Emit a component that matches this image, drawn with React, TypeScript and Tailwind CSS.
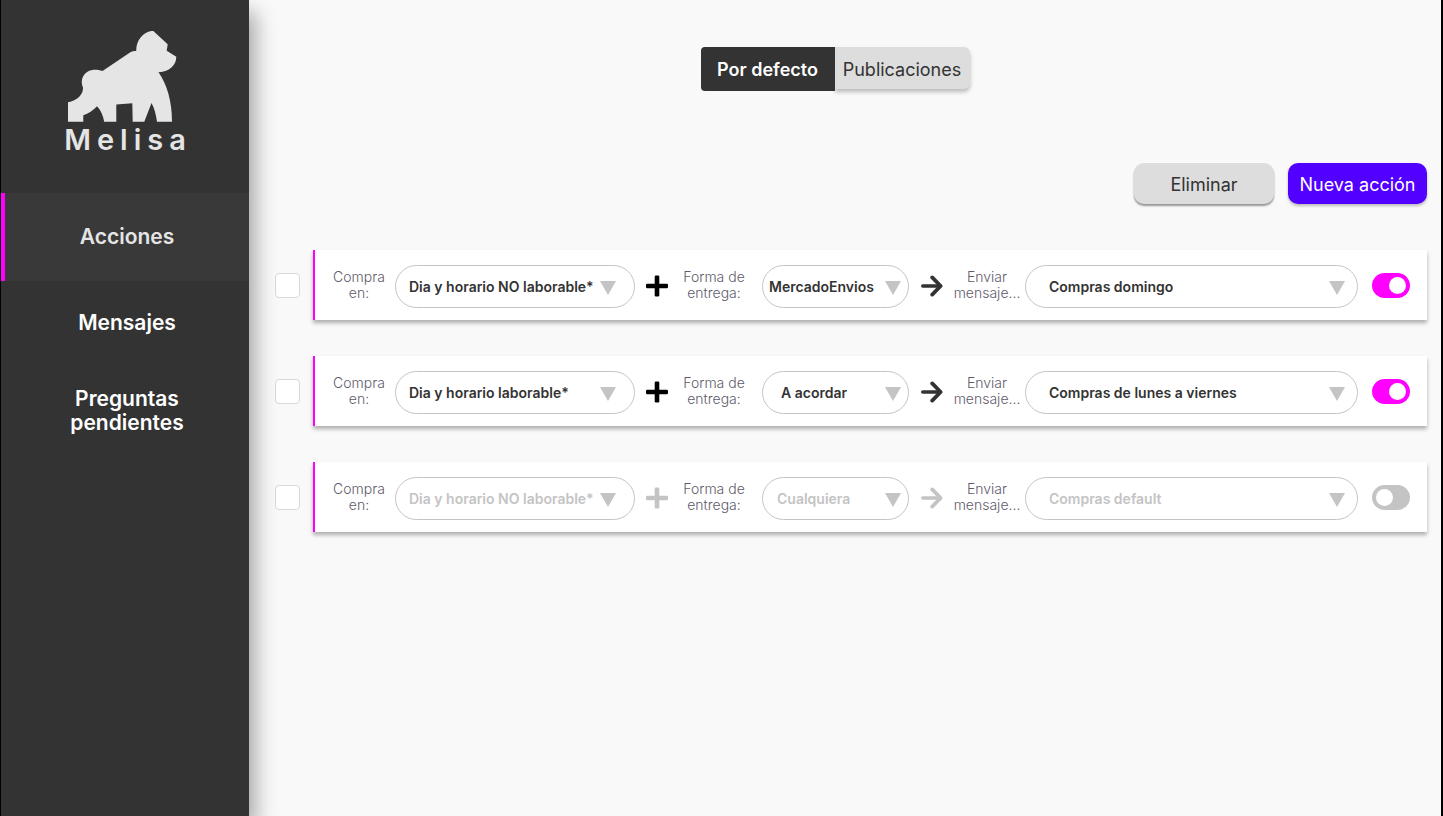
import { useState } from 'react';

type Row = {
  id: number;
  schedule: string;
  delivery: string;
  deliveryInset: string;
  message: string;
  enabled: boolean;
};

const initialRows: Row[] = [
  { id: 1, schedule: 'Dia y horario NO laborable*', delivery: 'MercadoEnvios', deliveryInset: 'pl-[6px]', message: 'Compras domingo', enabled: true },
  { id: 2, schedule: 'Dia y horario laborable*', delivery: 'A acordar', deliveryInset: 'pl-[18px]', message: 'Compras de lunes a viernes', enabled: true },
  { id: 3, schedule: 'Dia y horario NO laborable*', delivery: 'Cualquiera', deliveryInset: 'pl-[14px]', message: 'Compras default', enabled: false },
];

const navItems = [
  { label: 'Acciones', active: true, height: 'h-[88px]' },
  { label: 'Mensajes', active: false, height: 'h-[84px]' },
  { label: 'Preguntas pendientes', active: false, height: 'h-[92px]' },
];

function Logo() {
  return (
    <div className="flex h-[193px] flex-col items-center pt-[30px] text-[#e5e5e5]">
      <svg viewBox="67 30 116 92" className="h-[92px] w-[116px]" fill="currentColor" aria-hidden="true">
        <path d="M153.3 31 L167.7 44.3 L166.7 50.7 L176.3 56.7 C176.3 65 170 71.3 158.5 72.3 C167 84.5 172 101 172 121.7 H157 C156 114.5 154.3 108 151.5 103 L144.3 121.7 H132.7 L132.3 103.2 L116.3 104.5 V121.7 H104.2 C103 115.5 101 110.5 97 106.3 C93 110.5 88.5 113.5 83.3 115.3 V121.7 H68 V102.3 C77 100.7 83.5 94.5 83 87.5 C78.5 76 88 66 102.5 71 L130 52.5 C132 51.3 134 51 136.2 51 C136 41 142.5 32.3 151.5 31 Z" />
      </svg>
      <span className="mt-[2px] pl-[6px] text-[29px] leading-[32px] font-semibold tracking-[6px]">Melisa</span>
    </div>
  );
}

function PlusIcon({ on }: { on: boolean }) {
  return (
    <svg viewBox="0 0 22 22" className={on ? 'size-[22px] shrink-0 text-black' : 'size-[22px] shrink-0 text-[#c4c4c4]'} fill="currentColor" aria-hidden="true">
      <rect x="0" y="8.7" width="22" height="4.6" rx="1.2" />
      <rect x="8.7" y="0.5" width="4.6" height="21" rx="1.2" />
    </svg>
  );
}

function ArrowIcon({ on }: { on: boolean }) {
  return (
    <svg viewBox="0 0 22 22" className={on ? 'size-[22px] shrink-0 text-[#333333]' : 'size-[22px] shrink-0 text-[#c4c4c4]'} fill="none" stroke="currentColor" aria-hidden="true">
      <path d="M1.8 11 H19" strokeWidth="3.6" strokeLinecap="round" />
      <path d="M11.2 2.4 L19.6 11 L11.2 19.6" strokeWidth="3.8" strokeLinejoin="round" strokeLinecap="round" />
    </svg>
  );
}

function Pill({ id, value, on, width, inset, arrow }: { id: string; value: string; on: boolean; width: string; inset: string; arrow: string }) {
  return (
    <div className={`relative pt-[2px] ${width}`}>
      <select
        id={id}
        defaultValue={value}
        className={`h-[43px] w-full appearance-none rounded-full border border-[#c4c4c4] bg-white text-[14px] font-semibold ${inset} ${on ? 'text-[#333333]' : 'text-[#c4c4c4]'}`}
      >
        <option>{value}</option>
      </select>
      <svg viewBox="0 0 16 14" className={`pointer-events-none absolute top-[18px] h-[14px] w-[16px] ${arrow}`} fill="#c4c4c4" aria-hidden="true">
        <path d="M0 0 H16 L8 14 Z" />
      </svg>
    </div>
  );
}

function ActionRow({ row, onToggle }: { row: Row; onToggle: () => void }) {
  const on = row.enabled;
  const label = 'shrink-0 text-center text-[14px] leading-[16px] font-light whitespace-nowrap text-[#5f5b6b]';
  return (
    <li className="flex items-center gap-[13px]">
      <input
        type="checkbox"
        aria-label={`Seleccionar acción ${row.id}`}
        className="size-[25px] shrink-0 appearance-none rounded-[4px] border border-[#d9d9d9] bg-white checked:bg-[#ff00ff]"
      />
      <div className="flex h-[70px] min-w-0 flex-1 items-center border-l-2 border-[#ff00ff] bg-white pr-[17px] pl-4 shadow-[0_3px_4px_rgba(0,0,0,0.3)]">
        <label htmlFor={`schedule-${row.id}`} className={`${label} mr-2 w-14`}>
          Compra
          <br />
          en:
        </label>
        <Pill id={`schedule-${row.id}`} value={row.schedule} on={on} width="w-60 shrink-0" inset="pl-[13px]" arrow="right-[19px]" />
        <div className="mr-[10px] ml-[11px] flex pt-[2px]">
          <PlusIcon on={on} />
        </div>
        <label htmlFor={`delivery-${row.id}`} className={`${label} mr-3 w-[72px]`}>
          Forma de
          <br />
          entrega:
        </label>
        <Pill id={`delivery-${row.id}`} value={row.delivery} on={on} width="w-[147px] shrink-0" inset={row.deliveryInset} arrow="right-[8px]" />
        <div className="mr-[10px] ml-3 flex pt-[2px]">
          <ArrowIcon on={on} />
        </div>
        <label htmlFor={`message-${row.id}`} className={`${label} mr-1 w-[68px]`}>
          Enviar
          <br />
          mensaje...
        </label>
        <Pill id={`message-${row.id}`} value={row.message} on={on} width="min-w-0 flex-1" inset="pl-[23px]" arrow="right-[13px]" />
        <input
          type="checkbox"
          role="switch"
          aria-label={`Activar acción ${row.id}`}
          checked={on}
          onChange={onToggle}
          className="ml-[14px] flex h-[25px] w-[38px] shrink-0 appearance-none items-center rounded-full bg-[#c4c4c4] px-1 before:size-[17px] before:rounded-full before:bg-white checked:justify-end checked:bg-[#ff00ff]"
        />
      </div>
    </li>
  );
}

export default function App() {
  const [rows, setRows] = useState(initialRows);
  const toggle = (id: number) => setRows(rows.map((r) => (r.id === id ? { ...r, enabled: !r.enabled } : r)));

  return (
    <div className="flex min-h-screen border-r-2 border-l border-black bg-[#f9f9f9] font-['Inter',sans-serif]">
      <aside className="relative w-[248px] shrink-0 bg-[#333333] shadow-[6px_12px_20px_rgba(0,0,0,0.35)]">
        <Logo />
        <nav>
          {navItems.map((item) => (
            <a
              key={item.label}
              href="#"
              className={`flex items-center justify-center border-l-4 text-center text-[21px] leading-[24px] font-semibold ${item.height} ${
                item.active ? 'border-[#ff00ff] bg-[#393939] text-[#e5e5e5]' : 'border-transparent text-white'
              }`}
            >
              <span className="w-[130px]">{item.label}</span>
            </a>
          ))}
        </nav>
      </aside>

      <main className="min-w-0 flex-1 pt-[47px] pr-[14px] pl-[26px]">
        <div className="mr-8 flex items-start justify-center">
          <button type="button" className="relative h-[44px] w-[134px] rounded-l-[4px] bg-[#333333] text-[18px] font-semibold text-white">
            Por defecto
          </button>
          <button type="button" className="h-[42px] w-[135px] rounded-r-[6px] bg-[#dddddd] pt-[2px] text-[18px] text-[#333333] shadow-[0_3px_4px_rgba(0,0,0,0.25)]">
            Publicaciones
          </button>
        </div>

        <div className="mt-[72px] flex justify-end gap-[14px]">
          <button type="button" className="h-[41px] w-[140px] rounded-[10px] bg-[#dddddd] pt-[2px] text-[18px] text-[#333333] shadow-[0_2px_2px_rgba(0,0,0,0.4)]">
            Eliminar
          </button>
          <button type="button" className="h-[41px] w-[139px] rounded-[10px] bg-[#5200ff] pt-[2px] text-[18px] text-white shadow-[0_2px_3px_rgba(0,0,0,0.25)]">
            Nueva acción
          </button>
        </div>

        <ul className="mt-[46px] flex flex-col gap-9">
          {rows.map((row) => (
            <ActionRow key={row.id} row={row} onToggle={() => toggle(row.id)} />
          ))}
        </ul>
      </main>
    </div>
  );
}
